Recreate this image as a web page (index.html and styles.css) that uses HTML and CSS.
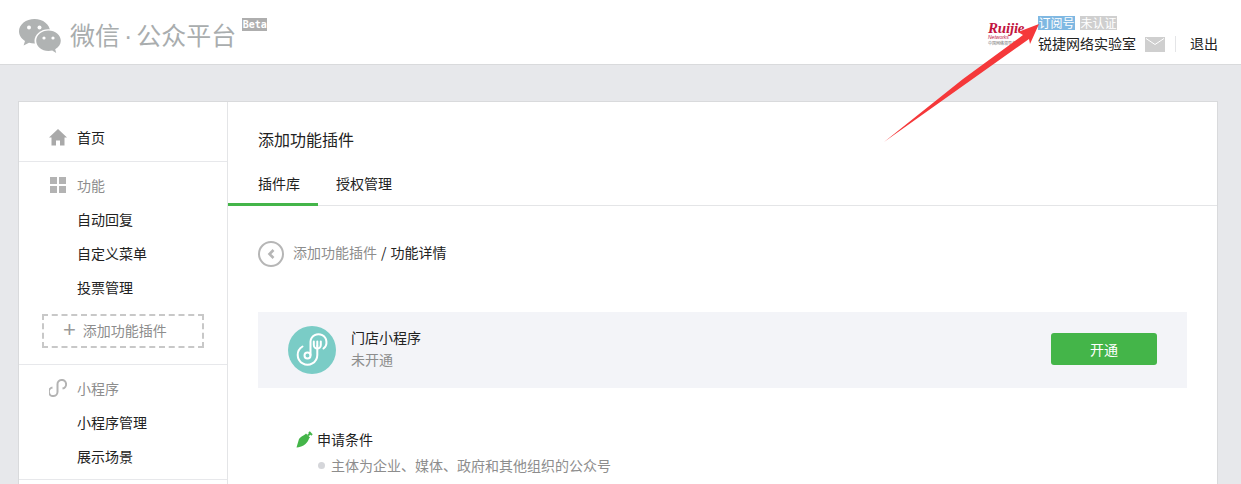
FILE: index.html
```html
<!DOCTYPE html>
<html lang="zh-CN">
<head>
<meta charset="utf-8">
<title>微信公众平台</title>
<link rel="stylesheet" href="styles.css">
</head>
<body>
<header class="top">
  <div class="brand">
    <svg class="brand-icon" width="44" height="36" viewBox="0 0 44 36">
      <path fill="#b0b3b3" d="M16.500 1C8 1 1 6.500 1 13.300c0 4 2.400 7.400 6 9.600L5.600 27.500l5.400-2.800c1.800.5 3.600.8 5.500.8 8.500 0 15.500-5.500 15.500-12.200S25 1 16.500 1z"/>
      <ellipse cx="30.500" cy="23" rx="14" ry="11.800" fill="#fff"/>
      <path fill="#b0b3b3" d="M30.500 12.500c-6.800 0-12.300 4.600-12.300 10.300s5.500 10.300 12.300 10.300c1.300 0 2.500-.2 3.700-.5l4 2.400-1-3.700c3.500-1.900 5.600-5 5.600-8.500 0-5.700-5.500-10.300-12.300-10.300z"/>
      <circle cx="11" cy="9.500" r="2" fill="#fff"/><circle cx="21.500" cy="9.500" r="2" fill="#fff"/>
      <circle cx="26" cy="20" r="1.600" fill="#fff"/><circle cx="35" cy="20" r="1.600" fill="#fff"/>
    </svg>
    <span class="brand-name">微信<i class="brand-dot">·</i>公众平台</span>
    <span class="beta">Beta</span>
  </div>
  <div class="account">
    <div class="ruijie"><b class="ruijie-name">Ruijie</b><span class="ruijie-sub">Networks</span><span class="ruijie-cn">中国网络领导者</span></div>
    <div class="account-info">
      <div class="tags"><span class="tag tag-blue">订阅号</span><span class="tag tag-grey">未认证</span></div>
      <div class="account-row">
        <span class="account-name">锐捷网络实验室</span>
        <svg class="mail" width="20" height="15" viewBox="0 0 20 15"><rect width="20" height="15" fill="#cfcfcf"/><path d="M1 1.500l9 6 9-6" fill="none" stroke="#fff" stroke-width="1"/></svg>
        <span class="account-sep"></span>
        <span class="logout">退出</span>
      </div>
    </div>
  </div>
</header>

<svg class="arrow" width="170" height="130" viewBox="0 0 170 130">
  <path fill="#f5383a" d="M156 9 L135 17 L140 20 L80 64 L1 127 L84 68 L146 24 L147 29z"/>
</svg>

<div class="card">
  <nav class="side">
    <section class="side-group side-home">
      <div class="side-item side-head side-strong">
        <svg class="side-icon" width="18" height="18" viewBox="0 0 18 18"><path fill="#a9a9a9" d="M9 1L0 9.500h2.500v8h4.500v-5h4v5h4.500v-8H18z"/></svg>首页
      </div>
    </section>
    <section class="side-group">
      <div class="side-item side-head">
        <svg class="side-icon" width="18" height="18" viewBox="0 0 18 18"><path fill="#b3b3b3" d="M1 1h7v7H1zM10 1h7v7h-7zM1 10h7v7H1zM10 10h7v7h-7z"/></svg>功能
      </div>
      <div class="side-item">自动回复</div>
      <div class="side-item">自定义菜单</div>
      <div class="side-item">投票管理</div>
      <div class="side-add"><span class="plus">+</span>添加功能插件</div>
    </section>
    <section class="side-group">
      <div class="side-item side-head">
        <svg class="side-icon" width="18" height="18" viewBox="0 0 18 18"><path fill="none" stroke="#b3b3b3" stroke-width="2" d="M3.500 8.500A4.300 4.300 0 1 0 8.500 12.500V5.500A4.300 4.300 0 1 1 13.500 9.500"/></svg>小程序
      </div>
      <div class="side-item">小程序管理</div>
      <div class="side-item">展示场景</div>
    </section>
  </nav>

  <main class="content">
    <h1 class="page-title">添加功能插件</h1>
    <div class="tabs">
      <div class="tab tab-on">插件库</div>
      <div class="tab">授权管理</div>
    </div>
    <div class="body">
      <div class="crumbs">
        <svg class="back" width="26" height="26" viewBox="0 0 26 26"><circle cx="13" cy="13" r="12" fill="none" stroke="#b6b6b6" stroke-width="2"/><path d="M15.500 9l-4 4 4 4" fill="none" stroke="#b6b6b6" stroke-width="2.600"/></svg>
        <span class="crumb crumb-link">添加功能插件</span><span class="crumb crumb-sep">/</span><span class="crumb">功能详情</span>
      </div>
      <div class="panel">
        <svg class="plugin-icon" width="48" height="48" viewBox="0 0 48 48">
          <circle cx="24" cy="24" r="24" fill="#7accc6"/>
          <g fill="none" stroke="#fff" stroke-width="2" stroke-linecap="round">
            <path d="M14.500 20.500A9.800 9.800 0 1 0 29.300 29V20"/>
            <path d="M22.500 29V15.500A8 8 0 1 1 35.500 22.500"/>
            <circle cx="19.500" cy="29.500" r="3"/>
            <path d="M25.800 15.500v3.500a3.500 3.500 0 0 0 7 0v-3.500M29.300 15.500V20"/>
          </g>
        </svg>
        <div class="plugin-text">
          <div class="plugin-name">门店小程序</div>
          <div class="plugin-state">未开通</div>
        </div>
        <button class="open" type="button">开通</button>
      </div>
      <div class="cond">
        <div class="cond-title">
          <svg class="pen" width="17" height="17" viewBox="0 0 17 17"><path fill="#44b549" d="M0.500 16.500L3 8c1-1.500 4-3.500 6-4.500l1-1 4 4-1 1c-.5 2-2 4-3.500 5.500-2.500 2-6 3.500-9.500 3.500z"/><path fill="none" stroke="#44b549" stroke-width="2" d="M12 4.500L15 1.500M13 1l3 3"/></svg>
          申请条件
        </div>
        <div class="cond-line">主体为企业、媒体、政府和其他组织的公众号</div>
      </div>
    </div>
  </main>
</div>
</body>
</html>
```
FILE: styles.css
```css
* { box-sizing: border-box; }
html { height: 484px; overflow: hidden; }
body {
  margin: 0;
  height: 484px;
  overflow: hidden;
  position: relative;
  background: #e7e8eb;
  color: #222;
  font: 14px/20px "Noto Sans CJK SC", "Liberation Sans", sans-serif;
}

.top {
  height: 65px;
  background: #fff;
  border-bottom: 1px solid #d9dadc;
  display: flex;
  justify-content: space-between;
  padding: 0 23px 0 18px;
}
.brand { display: flex; align-items: flex-start; }
.brand-icon { margin-top: 18px; flex: none; }
.brand-name {
  margin: 14px 0 0 8px;
  font-size: 25px;
  line-height: 40px;
  color: #a9adae;
  white-space: nowrap;
}
.brand-dot { font: normal 25px/40px "Liberation Sans", sans-serif; margin: 0 4px; }
.beta {
  margin: 18px 0 0 6px;
  width: 25px;
  height: 13px;
  background: #aeaeae;
  color: #fff;
  font: bold 10px/13px "DejaVu Sans Mono", monospace;
  text-align: center;
}

.account { display: flex; align-items: flex-start; }
.ruijie {
  width: 50px;
  margin-top: 22px;
  display: flex;
  flex-direction: column;
  color: #c2153f;
}
.ruijie-name { font: italic bold 15px/13px "Liberation Serif", serif; letter-spacing: -.2px; }
.ruijie-sub { font: italic 5px/5px "Liberation Sans", sans-serif; }
.ruijie-cn { font-size: 4px; line-height: 6px; color: #777; }
.account-info { display: flex; flex-direction: column; margin-top: 16px; }
.tags { display: flex; gap: 5px; }
.tag {
  width: 37px;
  height: 14px;
  color: #fff;
  font-size: 12px;
  line-height: 14px;
  text-align: center;
}
.tag-blue { background: #7fb8e2; }
.tag-grey { background: #cfcfcf; }
.account-row { display: flex; align-items: center; margin-top: 4px; height: 20px; }
.account-name { white-space: nowrap; margin-bottom: 2px; }
.mail { margin-left: 9px; flex: none; }
.account-sep { width: 1px; height: 16px; margin: 0 14px 0 10px; background: #e4e5e7; }
.logout { white-space: nowrap; margin-bottom: 2px; }

.arrow { position: absolute; left: 883px; top: 15px; }

.card {
  display: flex;
  width: 1200px;
  height: 420px;
  margin: 36px 0 0 18px;
  background: #fff;
  border: 1px solid #d9dadc;
}
.side { width: 209px; flex: none; border-right: 1px solid #e4e5e7; }
.side-group { padding: 7px 0 5px; border-bottom: 1px solid #e7e8eb; }
.side-home { padding: 19px 0 6px; }
.side-item {
  display: flex;
  align-items: center;
  height: 34px;
  padding: 0 0 2px 58px;
  white-space: nowrap;
}
.side-head { padding-left: 30px; color: #8d8d8d; }
.side-strong { color: #222; }
.side-icon { margin-right: 10px; flex: none; }
.side-add {
  display: flex;
  align-items: center;
  height: 34px;
  width: 162px;
  margin: 9px 0 11px 23px;
  padding: 0 0 2px 19px;
  border: 2px dashed #c8c8c8;
  color: #8d8d8d;
  white-space: nowrap;
}
.plus { font-size: 22px; line-height: 20px; margin-right: 7px; font-family: "Liberation Sans", sans-serif; color: #9a9a9a; }

.content { flex: 1; min-width: 0; }
.page-title {
  margin: 0;
  padding: 21px 0 0 30px;
  height: 61px;
  font-size: 16px;
  font-weight: 400;
  line-height: 32px;
  color: #222;
}
.tabs { display: flex; height: 43px; border-bottom: 1px solid #e4e5e7; }
.tab { padding: 1px 18px 0; height: 43px; line-height: 38px; border-bottom: 3px solid transparent; }
.tab-on { padding-left: 30px; border-bottom-color: #44b549; }

.body { padding: 35px 30px 0; }
.crumbs { display: flex; align-items: center; height: 26px; }
.back { margin-right: 9px; flex: none; }
.crumb { margin-bottom: 4px; }
.crumb-link { color: #8d8d8d; }
.crumb-sep { margin-left: 4px; margin-right: 4px; }

.panel {
  display: flex;
  align-items: center;
  height: 76px;
  margin-top: 45px;
  padding: 0 30px;
  background: #f3f4f8;
}
.plugin-icon { flex: none; margin-right: 15px; }
.plugin-text { flex: 1; line-height: 22px; margin-bottom: 4px; }
.plugin-state { color: #8d8d8d; }
.open {
  width: 106px;
  height: 32px;
  margin-bottom: 2px;
  border: 0;
  border-radius: 3px;
  background: #44b549;
  color: #fff;
  font: inherit;
  padding: 0;
}

.cond { margin-top: 41px; padding-left: 38px; }
.cond-title { display: flex; align-items: center; height: 20px; }
.pen { margin-right: 4px; flex: none; }
.cond-line { display: flex; align-items: center; margin-top: 6px; padding-left: 22px; color: #8d8d8d; }
.cond-line::before {
  content: "";
  width: 7px;
  height: 7px;
  margin-right: 6px;
  border-radius: 50%;
  background: #d5d6da;
}
```
